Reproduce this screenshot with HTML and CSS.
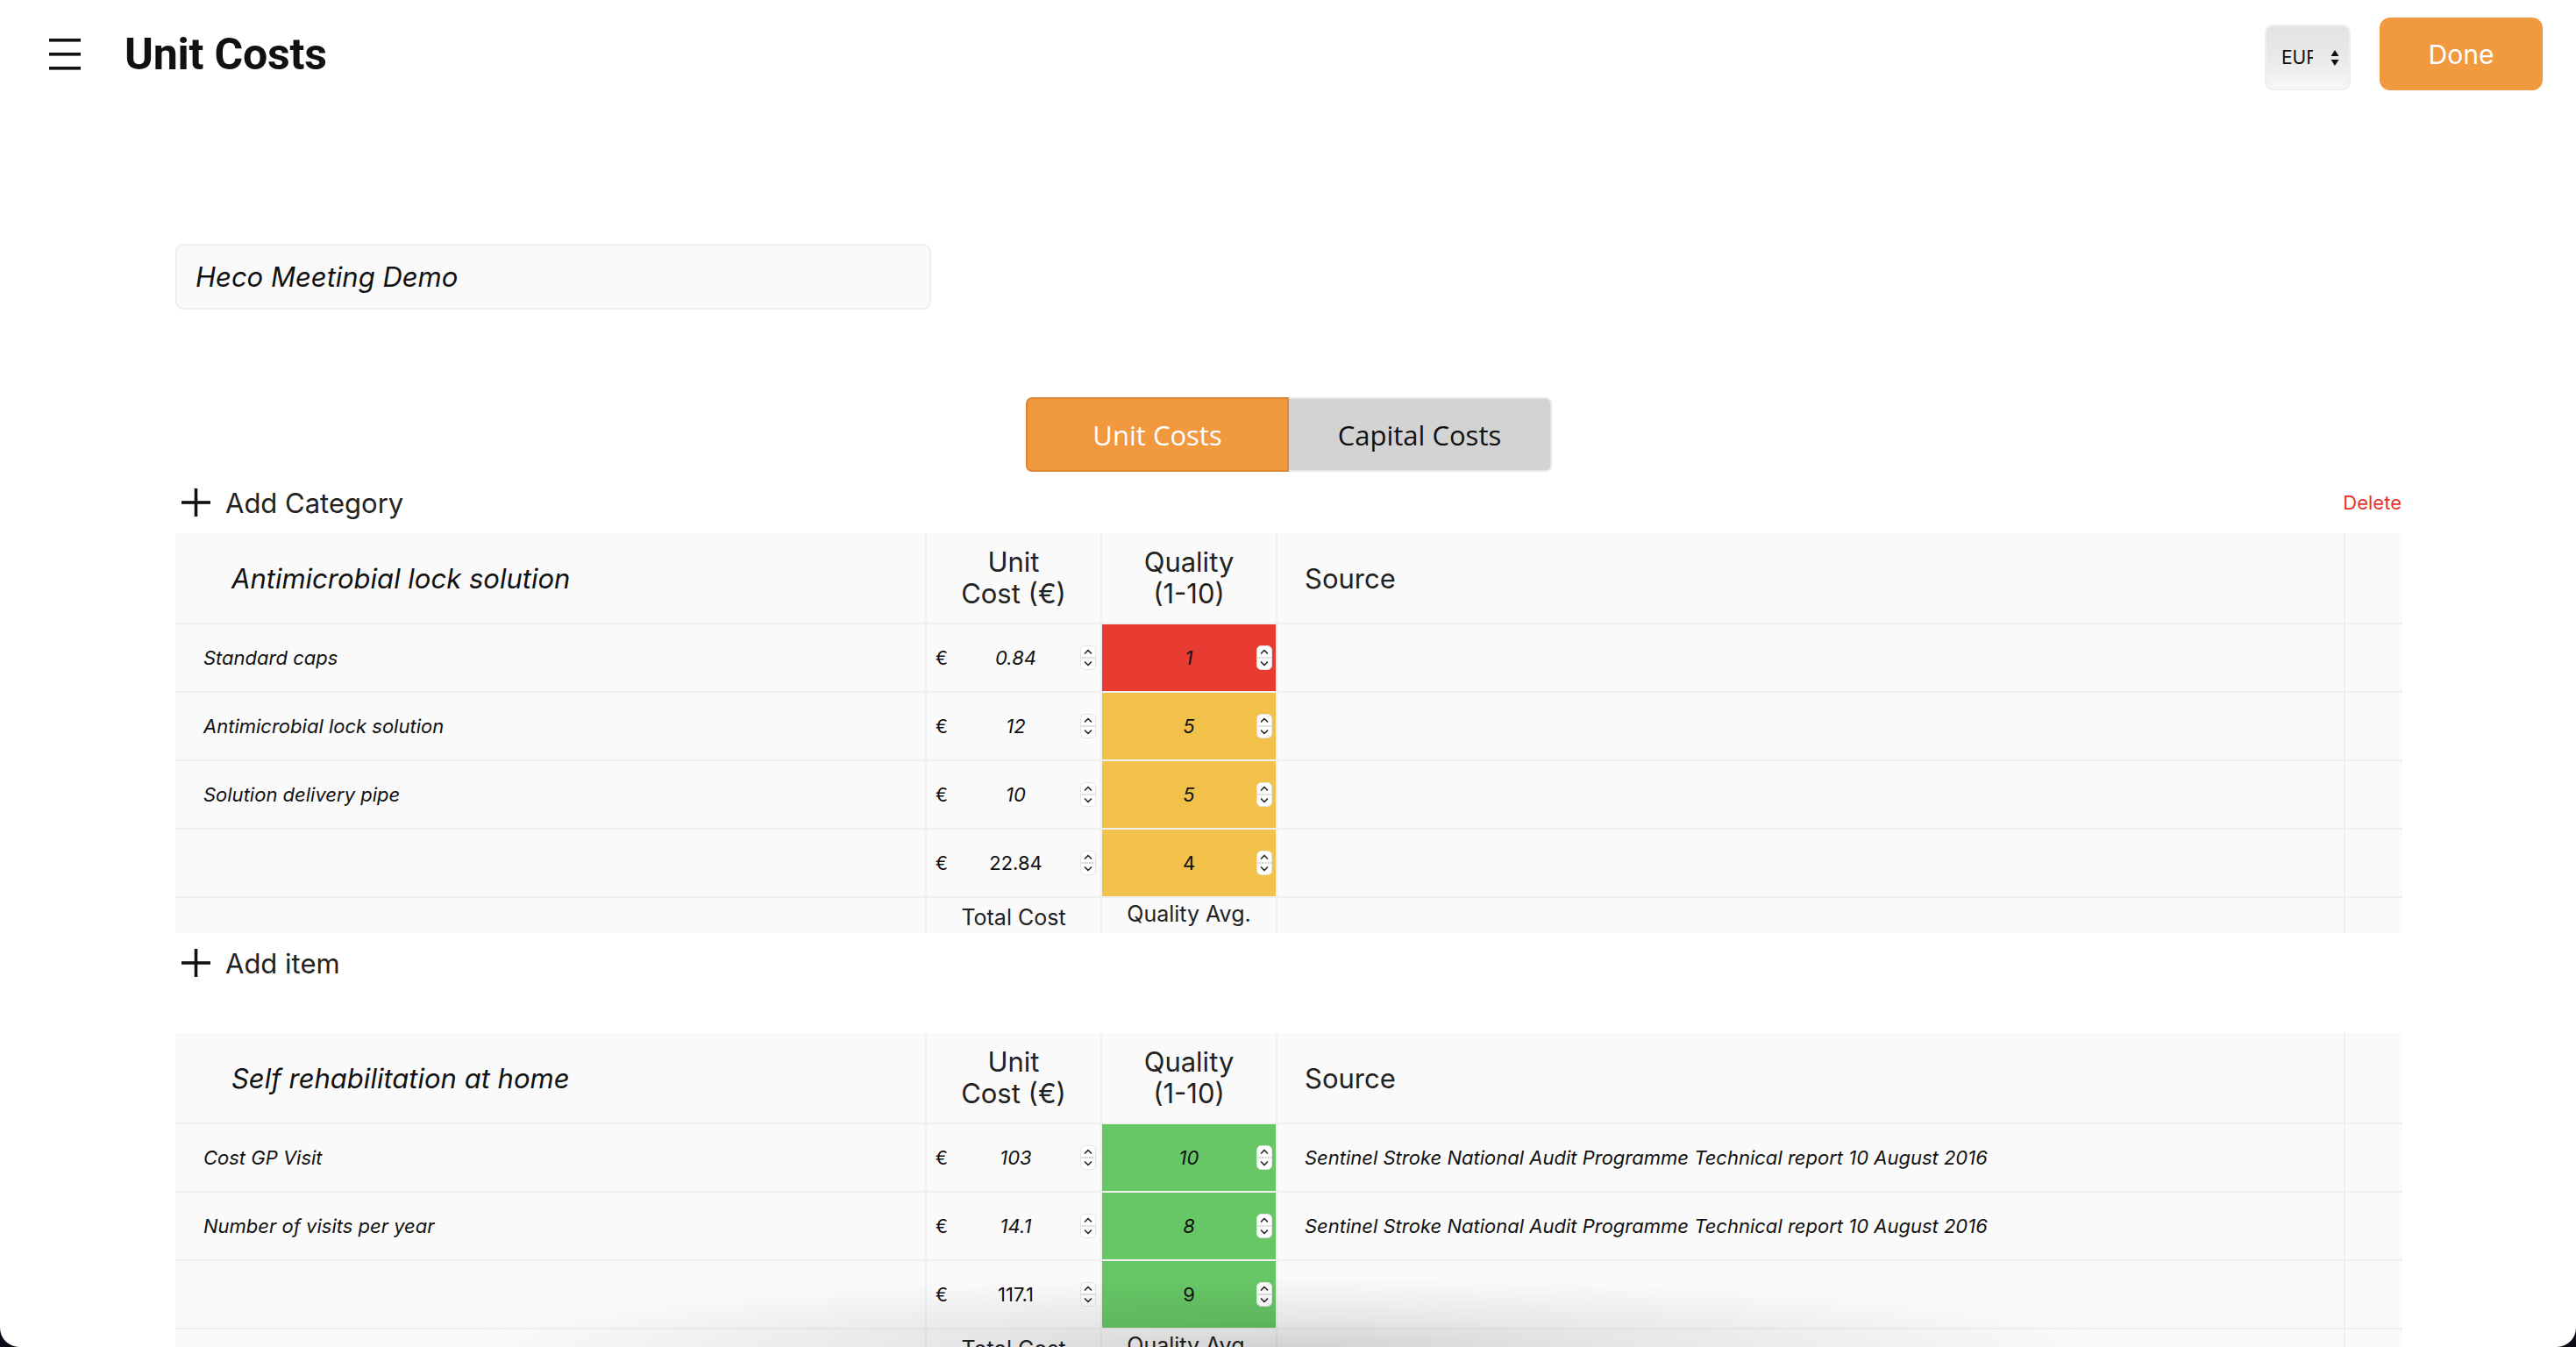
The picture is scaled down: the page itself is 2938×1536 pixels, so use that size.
FILE: index.html
```html
<!DOCTYPE html>
<html lang="en">
<head>
<meta charset="utf-8">
<title>Unit Costs</title>
<link rel="stylesheet" href="styles.css">
</head>
<body>
<div class="window">
  <header class="topbar">
    <div class="topbar-left">
      <svg class="menu-icon" width="36" height="36" viewBox="0 0 36 36"><rect x="0" y="0" width="36" height="3.6"/><rect x="0" y="16" width="36" height="3.6"/><rect x="0" y="32" width="36" height="3.6"/></svg>
      <h1 class="title">Unit Costs</h1>
    </div>
    <div class="topbar-right">
      <div class="currency"><span class="currency-text">EUR</span><svg class="currency-arrows" width="10" height="20" viewBox="0 0 10 20"><path d="M5 1 L9.5 8 L0.5 8 Z"/><path d="M5 19 L9.5 12 L0.5 12 Z"/></svg></div>
      <button class="done">Done</button>
    </div>
  </header>

  <main class="content">
    <div class="name-input">Heco Meeting Demo</div>

    <div class="tabs">
      <button class="tab tab-active">Unit Costs</button>
      <button class="tab tab-inactive">Capital Costs</button>
    </div>

    <div class="action-row">
      <span class="add-link"><svg class="plus" width="33" height="32" viewBox="0 0 33 32"><rect x="0" y="14.2" width="33" height="3.6"/><rect x="14.7" y="0" width="3.6" height="32"/></svg>Add Category</span>
      <span class="delete">Delete</span>
    </div>

    <section class="cost-table">
      <div class="row row-head">
        <div class="cell head-name">Antimicrobial lock solution</div>
        <div class="cell head-col">Unit<br>Cost (€)</div>
        <div class="cell head-col">Quality<br>(1-10)</div>
        <div class="cell head-source">Source</div>
        <div class="cell"></div>
      </div>
      <div class="row row-item">
        <div class="cell item-name">Standard caps</div>
        <div class="cell num-cell"><span class="euro">€</span><span class="num italic">0.84</span><span class="spin"><svg width="18" height="28" viewBox="0 0 18 28"><rect x="0.5" y="0.5" width="17" height="27" rx="5" class="spin-bg"/><line x1="1" y1="14" x2="17" y2="14" class="spin-mid"/><path d="M5.5 9 L9 5.5 L12.5 9" class="spin-chev"/><path d="M5.5 19 L9 22.5 L12.5 19" class="spin-chev"/></svg></span></div>
        <div class="cell num-cell q-cell q-red"><span></span><span class="num italic">1</span><span class="spin"><svg width="18" height="28" viewBox="0 0 18 28"><rect x="0.5" y="0.5" width="17" height="27" rx="5" class="spin-bg"/><line x1="1" y1="14" x2="17" y2="14" class="spin-mid"/><path d="M5.5 9 L9 5.5 L12.5 9" class="spin-chev"/><path d="M5.5 19 L9 22.5 L12.5 19" class="spin-chev"/></svg></span></div>
        <div class="cell source"></div>
        <div class="cell"></div>
      </div>
      <div class="row row-item">
        <div class="cell item-name">Antimicrobial lock solution</div>
        <div class="cell num-cell"><span class="euro">€</span><span class="num italic">12</span><span class="spin"><svg width="18" height="28" viewBox="0 0 18 28"><rect x="0.5" y="0.5" width="17" height="27" rx="5" class="spin-bg"/><line x1="1" y1="14" x2="17" y2="14" class="spin-mid"/><path d="M5.5 9 L9 5.5 L12.5 9" class="spin-chev"/><path d="M5.5 19 L9 22.5 L12.5 19" class="spin-chev"/></svg></span></div>
        <div class="cell num-cell q-cell q-yellow"><span></span><span class="num italic">5</span><span class="spin"><svg width="18" height="28" viewBox="0 0 18 28"><rect x="0.5" y="0.5" width="17" height="27" rx="5" class="spin-bg"/><line x1="1" y1="14" x2="17" y2="14" class="spin-mid"/><path d="M5.5 9 L9 5.5 L12.5 9" class="spin-chev"/><path d="M5.5 19 L9 22.5 L12.5 19" class="spin-chev"/></svg></span></div>
        <div class="cell source"></div>
        <div class="cell"></div>
      </div>
      <div class="row row-item">
        <div class="cell item-name">Solution delivery pipe</div>
        <div class="cell num-cell"><span class="euro">€</span><span class="num italic">10</span><span class="spin"><svg width="18" height="28" viewBox="0 0 18 28"><rect x="0.5" y="0.5" width="17" height="27" rx="5" class="spin-bg"/><line x1="1" y1="14" x2="17" y2="14" class="spin-mid"/><path d="M5.5 9 L9 5.5 L12.5 9" class="spin-chev"/><path d="M5.5 19 L9 22.5 L12.5 19" class="spin-chev"/></svg></span></div>
        <div class="cell num-cell q-cell q-yellow"><span></span><span class="num italic">5</span><span class="spin"><svg width="18" height="28" viewBox="0 0 18 28"><rect x="0.5" y="0.5" width="17" height="27" rx="5" class="spin-bg"/><line x1="1" y1="14" x2="17" y2="14" class="spin-mid"/><path d="M5.5 9 L9 5.5 L12.5 9" class="spin-chev"/><path d="M5.5 19 L9 22.5 L12.5 19" class="spin-chev"/></svg></span></div>
        <div class="cell source"></div>
        <div class="cell"></div>
      </div>
      <div class="row row-item">
        <div class="cell item-name"></div>
        <div class="cell num-cell"><span class="euro">€</span><span class="num">22.84</span><span class="spin"><svg width="18" height="28" viewBox="0 0 18 28"><rect x="0.5" y="0.5" width="17" height="27" rx="5" class="spin-bg"/><line x1="1" y1="14" x2="17" y2="14" class="spin-mid"/><path d="M5.5 9 L9 5.5 L12.5 9" class="spin-chev"/><path d="M5.5 19 L9 22.5 L12.5 19" class="spin-chev"/></svg></span></div>
        <div class="cell num-cell q-cell q-yellow"><span></span><span class="num">4</span><span class="spin"><svg width="18" height="28" viewBox="0 0 18 28"><rect x="0.5" y="0.5" width="17" height="27" rx="5" class="spin-bg"/><line x1="1" y1="14" x2="17" y2="14" class="spin-mid"/><path d="M5.5 9 L9 5.5 L12.5 9" class="spin-chev"/><path d="M5.5 19 L9 22.5 L12.5 19" class="spin-chev"/></svg></span></div>
        <div class="cell source"></div>
        <div class="cell"></div>
      </div>
      <div class="row row-foot">
        <div class="cell"></div>
        <div class="cell foot-label">Total Cost</div>
        <div class="cell foot-label foot-up">Quality Avg.</div>
        <div class="cell"></div>
        <div class="cell"></div>
      </div>
    </section>

    <div class="action-row action-row-item">
      <span class="add-link"><svg class="plus" width="33" height="32" viewBox="0 0 33 32"><rect x="0" y="14.2" width="33" height="3.6"/><rect x="14.7" y="0" width="3.6" height="32"/></svg>Add item</span>
    </div>

    <section class="cost-table cost-table-second">
      <div class="row row-head">
        <div class="cell head-name">Self rehabilitation at home</div>
        <div class="cell head-col">Unit<br>Cost (€)</div>
        <div class="cell head-col">Quality<br>(1-10)</div>
        <div class="cell head-source">Source</div>
        <div class="cell"></div>
      </div>
      <div class="row row-item">
        <div class="cell item-name">Cost GP Visit</div>
        <div class="cell num-cell"><span class="euro">€</span><span class="num italic">103</span><span class="spin"><svg width="18" height="28" viewBox="0 0 18 28"><rect x="0.5" y="0.5" width="17" height="27" rx="5" class="spin-bg"/><line x1="1" y1="14" x2="17" y2="14" class="spin-mid"/><path d="M5.5 9 L9 5.5 L12.5 9" class="spin-chev"/><path d="M5.5 19 L9 22.5 L12.5 19" class="spin-chev"/></svg></span></div>
        <div class="cell num-cell q-cell q-green"><span></span><span class="num italic">10</span><span class="spin"><svg width="18" height="28" viewBox="0 0 18 28"><rect x="0.5" y="0.5" width="17" height="27" rx="5" class="spin-bg"/><line x1="1" y1="14" x2="17" y2="14" class="spin-mid"/><path d="M5.5 9 L9 5.5 L12.5 9" class="spin-chev"/><path d="M5.5 19 L9 22.5 L12.5 19" class="spin-chev"/></svg></span></div>
        <div class="cell source">Sentinel Stroke National Audit Programme Technical report 10 August 2016</div>
        <div class="cell"></div>
      </div>
      <div class="row row-item">
        <div class="cell item-name">Number of visits per year</div>
        <div class="cell num-cell"><span class="euro">€</span><span class="num italic">14.1</span><span class="spin"><svg width="18" height="28" viewBox="0 0 18 28"><rect x="0.5" y="0.5" width="17" height="27" rx="5" class="spin-bg"/><line x1="1" y1="14" x2="17" y2="14" class="spin-mid"/><path d="M5.5 9 L9 5.5 L12.5 9" class="spin-chev"/><path d="M5.5 19 L9 22.5 L12.5 19" class="spin-chev"/></svg></span></div>
        <div class="cell num-cell q-cell q-green"><span></span><span class="num italic">8</span><span class="spin"><svg width="18" height="28" viewBox="0 0 18 28"><rect x="0.5" y="0.5" width="17" height="27" rx="5" class="spin-bg"/><line x1="1" y1="14" x2="17" y2="14" class="spin-mid"/><path d="M5.5 9 L9 5.5 L12.5 9" class="spin-chev"/><path d="M5.5 19 L9 22.5 L12.5 19" class="spin-chev"/></svg></span></div>
        <div class="cell source">Sentinel Stroke National Audit Programme Technical report 10 August 2016</div>
        <div class="cell"></div>
      </div>
      <div class="row row-item">
        <div class="cell item-name"></div>
        <div class="cell num-cell"><span class="euro">€</span><span class="num">117.1</span><span class="spin"><svg width="18" height="28" viewBox="0 0 18 28"><rect x="0.5" y="0.5" width="17" height="27" rx="5" class="spin-bg"/><line x1="1" y1="14" x2="17" y2="14" class="spin-mid"/><path d="M5.5 9 L9 5.5 L12.5 9" class="spin-chev"/><path d="M5.5 19 L9 22.5 L12.5 19" class="spin-chev"/></svg></span></div>
        <div class="cell num-cell q-cell q-green"><span></span><span class="num">9</span><span class="spin"><svg width="18" height="28" viewBox="0 0 18 28"><rect x="0.5" y="0.5" width="17" height="27" rx="5" class="spin-bg"/><line x1="1" y1="14" x2="17" y2="14" class="spin-mid"/><path d="M5.5 9 L9 5.5 L12.5 9" class="spin-chev"/><path d="M5.5 19 L9 22.5 L12.5 19" class="spin-chev"/></svg></span></div>
        <div class="cell source"></div>
        <div class="cell"></div>
      </div>
      <div class="row row-foot">
        <div class="cell"></div>
        <div class="cell foot-label">Total Cost</div>
        <div class="cell foot-label foot-up">Quality Avg.</div>
        <div class="cell"></div>
        <div class="cell"></div>
      </div>
    </section>
  </main>
  <div class="bottom-shade"></div>
</div>
</body>
</html>
```

FILE: styles.css
```css
html, body {
  margin: 0;
  padding: 0;
  background: #0c0b18;
  height: 1536px;
  overflow: hidden;
}

.window {
  position: relative;
  width: 2938px;
  height: 1536px;
  background: #ffffff;
  border-radius: 0 0 22px 22px;
  overflow: hidden;
  font-family: Inter, Roboto, "Liberation Sans", Arial, sans-serif;
  color: #1f1f1f;
}

/* Top bar */
.topbar {
  height: 124px;
  display: flex;
  justify-content: space-between;
  align-items: flex-start;
  padding: 0 38px 0 56px;
}

.topbar-left {
  display: flex;
  align-items: flex-start;
}

.menu-icon {
  margin-top: 44px;
  fill: #111;
}

.title {
  margin: 32px 0 0 50px;
  font-family: Roboto, "Liberation Sans", Arial, sans-serif;
  font-size: 50px;
  line-height: 60px;
  font-weight: 700;
  color: #111;
  letter-spacing: -0.2px;
}

.topbar-right {
  display: flex;
  align-items: flex-start;
  gap: 33px;
}

.currency {
  margin-top: 28px;
  width: 98px;
  height: 75px;
  box-sizing: border-box;
  border: 2px solid #efefef;
  border-radius: 9px;
  background: linear-gradient(#e3e3e3 0%, #e9e9e9 50%, #f7f7f7 100%);
  display: flex;
  align-items: center;
  padding-left: 17px;
}

.currency-text {
  display: inline-block;
  width: 36px;
  overflow: hidden;
  white-space: nowrap;
  font-size: 21px;
  color: #111;
}

.currency-arrows {
  margin-left: 20px;
  fill: #111;
}

.done {
  margin-top: 20px;
  width: 186px;
  height: 83px;
  border: none;
  border-radius: 12px;
  background: #f0993f;
  color: #ffffff;
  font-family: Inter, Roboto, "Liberation Sans", Arial, sans-serif;
  font-size: 30px;
  padding: 0;
}

/* Content */
.content {
  padding: 154px 198px 0 200px;
}

.name-input {
  width: 862px;
  height: 75px;
  box-sizing: border-box;
  border: 2px solid #eeeeee;
  border-radius: 9px;
  background: #fafafa;
  display: flex;
  align-items: center;
  padding-left: 21px;
  font-style: italic;
  font-size: 31px;
  color: #111;
}

.tabs {
  margin-top: 100px;
  display: flex;
  justify-content: center;
}

.tab {
  width: 300px;
  height: 85px;
  box-sizing: border-box;
  font-family: "Open Sans", "Noto Sans", sans-serif;
  font-size: 31px;
  padding: 0;
}

.tab-active {
  background: #f0993f;
  color: #ffffff;
  border: 2px solid #dc8632;
  border-radius: 7px 0 0 7px;
}

.tab-inactive {
  background: #d3d3d3;
  color: #111;
  border: 2px solid #e8e8e8;
  border-left: none;
  border-radius: 0 7px 7px 0;
}

.action-row {
  margin-top: 8px;
  height: 54px;
  display: flex;
  align-items: center;
  justify-content: space-between;
}

.action-row-item {
  margin-top: 0;
  height: 68px;
  margin-bottom: 46px;
}

.add-link {
  display: flex;
  align-items: center;
  padding-left: 7px;
  font-size: 31px;
  color: #222;
}

.plus {
  fill: #111;
  margin-right: 17px;
}

.delete {
  font-size: 22px;
  color: #e8332a;
  padding-right: 1px;
}

/* Tables */
.cost-table {
  margin-top: 8px;
  display: flex;
  flex-direction: column;
  gap: 2px;
  background: #f0f0f0;
}

.cost-table-second {
  margin-top: 0;
}

.row {
  display: grid;
  grid-template-columns: 855px 198px 198px 1216px 65px;
  column-gap: 2px;
}

.row-head { height: 102px; }
.row-item { height: 76px; }
.row-foot { height: 40px; }

.cell {
  background: #fafafa;
  display: flex;
  align-items: center;
  min-width: 0;
}

.head-name {
  padding-left: 64px;
  font-style: italic;
  font-size: 31px;
  color: #111;
}

.head-col {
  justify-content: center;
  text-align: center;
  font-size: 31px;
  line-height: 36px;
  color: #222;
}

.head-source {
  padding-left: 31px;
  font-size: 31px;
  color: #222;
}

.item-name {
  padding-left: 32px;
  font-style: italic;
  font-size: 22px;
  color: #111;
}

.num-cell {
  display: grid;
  grid-template-columns: 30px 1fr 30px;
  align-items: center;
  padding: 0 5px 0 10px;
  font-size: 22px;
  color: #111;
}

.q-cell {
  padding: 0 4px;
}

.euro {
  justify-self: start;
  font-size: 21px;
}

.num {
  text-align: center;
}

.italic {
  font-style: italic;
}

.spin {
  justify-self: end;
  display: flex;
}

.spin-bg {
  fill: #ffffff;
  stroke: #e2e2e2;
  stroke-width: 1;
}

.spin-mid {
  stroke: #d8d8d8;
  stroke-width: 1.5;
}

.spin-chev {
  fill: none;
  stroke: #2a2a2a;
  stroke-width: 1.7;
  stroke-linecap: round;
  stroke-linejoin: round;
}

.q-red { background: #e83c32; }
.q-yellow { background: #f2c14a; }
.q-green { background: #67c766; }

.source {
  padding-left: 31px;
  font-style: italic;
  font-size: 22px;
  color: #111;
  white-space: nowrap;
}

.foot-label {
  justify-content: center;
  align-items: flex-end;
  padding-bottom: 3px;
  font-size: 25px;
  color: #222;
}

.foot-up {
  padding-bottom: 7px;
}

.bottom-shade {
  position: absolute;
  left: 520px;
  bottom: 0;
  width: 1900px;
  height: 80px;
  background: radial-gradient(ellipse 50% 100% at 50% 100%, rgba(0, 0, 0, 0.16) 0%, rgba(0, 0, 0, 0.08) 40%, rgba(0, 0, 0, 0) 100%);
  pointer-events: none;
}
```
